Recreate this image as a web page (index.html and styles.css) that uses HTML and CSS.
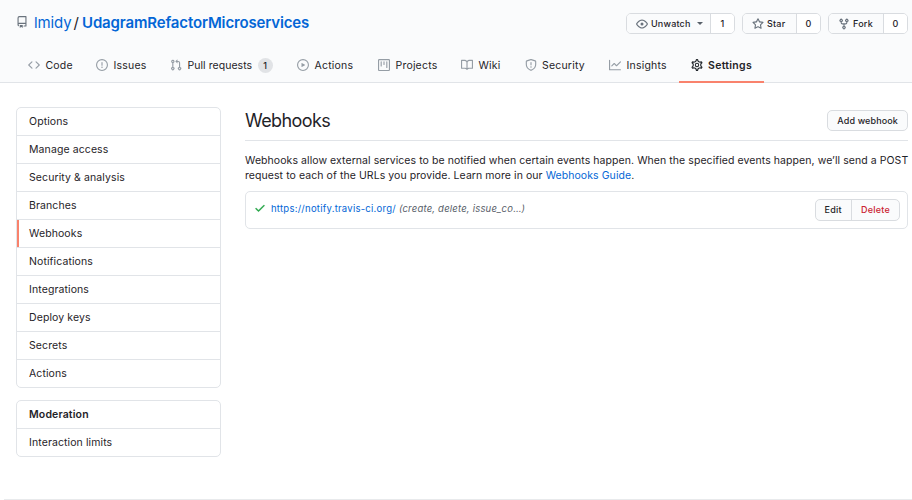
FILE: index.html
```html
<!DOCTYPE html>
<html lang="en">
<head>
<meta charset="utf-8">
<title>Webhooks</title>
<link rel="stylesheet" href="styles.css">
</head>
<body>
<header class="repo-head">
  <div class="repo-top">
    <h1 class="repo-title">
      <svg class="icon repo-icon" viewBox="0 0 16 16"><path d="M2 2.5A2.5 2.5 0 014.5 0h8.75a.75.75 0 01.75.75v12.5a.75.75 0 01-.75.75h-2.5a.75.75 0 110-1.5h1.75v-2h-8a1 1 0 00-.714 1.7.75.75 0 01-1.072 1.05A2.495 2.495 0 012 11.5v-9zm10.500-1V9h-8c-.356 0-.694.074-1 .208V2.500a1 1 0 011-1h8zM5 12.250v3.250a.25.25 0 00.4.200l1.450-1.087a.25.25 0 01.3 0L8.600 15.700a.25.25 0 00.4-.200v-3.250a.25.25 0 00-.25-.25h-3.500a.25.25 0 00-.25.25z"/></svg>
      <a class="owner">lmidy</a><span class="slash">/</span><a class="name">UdagramRefactorMicroservices</a>
    </h1>
    <div class="social">
      <div class="group watch"><a class="action"><svg class="icon" viewBox="0 0 16 16"><path d="M1.679 7.932c.412-.621 1.242-1.750 2.366-2.717C5.175 4.242 6.527 3.500 8 3.500c1.473 0 2.824.742 3.955 1.715 1.124.967 1.954 2.096 2.366 2.717a.119.119 0 010 .136c-.412.621-1.242 1.750-2.366 2.717C10.825 11.758 9.473 12.500 8 12.500c-1.473 0-2.824-.742-3.955-1.715C2.920 9.818 2.090 8.690 1.679 8.068a.119.119 0 010-.136zM8 2c-1.981 0-3.670.992-4.933 2.078C1.797 5.169.880 6.423.430 7.100a1.619 1.619 0 000 1.798c.450.678 1.367 1.932 2.637 3.024C4.329 13.008 6.019 14 8 14c1.981 0 3.670-.992 4.933-2.078 1.270-1.091 2.187-2.345 2.637-3.023a1.619 1.619 0 000-1.798c-.450-.678-1.367-1.932-2.637-3.023C11.671 2.992 9.981 2 8 2zm0 8a2 2 0 100-4 2 2 0 000 4z"/></svg><span>Unwatch</span><i class="caret"></i></a><a class="count">1</a></div>
      <div class="group star"><a class="action"><svg class="icon" viewBox="0 0 16 16"><path d="M8 .250a.75.75 0 01.673.418l1.882 3.815 4.210.612a.75.75 0 01.416 1.279l-3.046 2.970.719 4.192a.75.75 0 01-1.088.791L8 12.347l-3.766 1.980a.75.75 0 01-1.088-.790l.720-4.194L.818 6.374a.75.75 0 01.416-1.280l4.210-.611L7.327.668A.75.75 0 018 .250zm0 2.445L6.615 5.500a.75.75 0 01-.564.410l-3.097.450 2.240 2.184a.75.75 0 01.216.664l-.528 3.084 2.769-1.456a.75.75 0 01.698 0l2.770 1.456-.530-3.084a.75.75 0 01.216-.664l2.240-2.183-3.096-.450a.75.75 0 01-.564-.410L8 2.694z"/></svg><span>Star</span></a><a class="count">0</a></div>
      <div class="group fork"><a class="action"><svg class="icon" viewBox="0 0 16 16"><path d="M5 3.250a.75.75 0 11-1.500 0 .75.75 0 011.500 0zm0 2.122a2.250 2.250 0 10-1.500 0v.878A2.250 2.250 0 005.750 8.500h1.500v2.128a2.251 2.251 0 101.500 0V8.500h1.500a2.250 2.250 0 002.250-2.250v-.878a2.250 2.250 0 10-1.500 0v.878a.75.75 0 01-.75.75h-4.500A.75.75 0 015 6.250v-.878zm3.750 7.378a.75.75 0 11-1.500 0 .75.75 0 011.500 0zm3-8.750a.75.75 0 100-1.500.75.75 0 000 1.500z"/></svg><span>Fork</span></a><a class="count">0</a></div>
    </div>
  </div>
  <nav class="tabs">
    <a class="tab"><svg class="icon" viewBox="0 0 16 16"><path d="M4.720 3.220a.75.75 0 011.060 1.060L2.060 8l3.720 3.720a.75.75 0 11-1.060 1.060L.470 8.530a.75.75 0 010-1.060l4.250-4.250zm6.560 0a.75.75 0 10-1.060 1.060L13.940 8l-3.720 3.720a.75.75 0 101.060 1.060l4.250-4.250a.75.75 0 000-1.060l-4.250-4.250z"/></svg><span>Code</span></a>
    <a class="tab"><svg class="icon" viewBox="0 0 16 16"><path d="M8 1.500a6.500 6.500 0 100 13 6.500 6.500 0 000-13zM0 8a8 8 0 1116 0A8 8 0 010 8zm9 3a1 1 0 11-2 0 1 1 0 012 0zm-.250-6.250a.75.75 0 00-1.500 0v3.500a.75.75 0 001.500 0v-3.500z"/></svg><span>Issues</span></a>
    <a class="tab pulls"><svg class="icon" viewBox="0 0 16 16"><path d="M7.177 3.073L9.573.677A.25.25 0 0110 .854v4.792a.25.25 0 01-.427.177L7.177 3.427a.25.25 0 010-.354zM3.750 2.500a.75.75 0 100 1.500.75.75 0 000-1.500zm-2.250.750a2.250 2.250 0 113 2.122v5.256a2.251 2.251 0 11-1.500 0V5.372A2.250 2.250 0 011.500 3.250zM11 2.500h-1V4h1a1 1 0 011 1v5.628a2.251 2.251 0 101.500 0V5A2.500 2.500 0 0011 2.500zm1 10.250a.75.75 0 111.500 0 .75.75 0 01-1.500 0zM3.750 12a.75.75 0 100 1.500.75.75 0 000-1.500z"/></svg><span>Pull requests</span><b class="badge">1</b></a>
    <a class="tab"><svg class="icon" viewBox="0 0 16 16"><path d="M1.500 8a6.500 6.500 0 1113 0 6.500 6.500 0 01-13 0zM8 0a8 8 0 100 16A8 8 0 008 0zM6.379 5.227A.25.25 0 006 5.442v5.117a.25.25 0 00.379.214l4.264-2.559a.25.25 0 000-.428L6.379 5.227z"/></svg><span>Actions</span></a>
    <a class="tab"><svg class="icon" viewBox="0 0 16 16"><path d="M1.750 0A1.750 1.750 0 000 1.750v12.500C0 15.216.784 16 1.750 16h12.500A1.750 1.750 0 0016 14.250V1.750A1.750 1.750 0 0014.250 0H1.750zM1.500 1.750a.25.25 0 01.25-.25h12.500a.25.25 0 01.25.25v12.500a.25.25 0 01-.25.25H1.750a.25.25 0 01-.25-.25V1.750zM11.750 3a.75.75 0 00-.75.75v7.500a.75.75 0 001.500 0v-7.500a.75.75 0 00-.75-.75zm-8.250.750a.75.75 0 011.500 0v5.500a.75.75 0 01-1.500 0v-5.500zM8 3a.75.75 0 00-.75.75v3.500a.75.75 0 001.500 0v-3.500A.75.75 0 008 3z"/></svg><span>Projects</span></a>
    <a class="tab"><svg class="icon" viewBox="0 0 16 16"><path d="M0 1.750A.75.75 0 01.75 1h4.253c1.227 0 2.317.590 3 1.501A3.744 3.744 0 0111.006 1h4.245a.75.75 0 01.75.75v10.500a.75.75 0 01-.75.75h-4.507a2.250 2.250 0 00-1.591.659l-.622.621a.75.75 0 01-1.060 0l-.622-.621A2.250 2.250 0 005.258 13H.750a.75.75 0 01-.75-.75V1.750zm8.755 3a2.250 2.250 0 012.250-2.250H14.500v9h-3.757c-.710 0-1.400.201-1.992.572l.004-7.322zm-1.504 7.324l.004-5.073-.002-2.253A2.250 2.250 0 005.003 2.500H1.500v9h3.757a3.750 3.750 0 011.994.574z"/></svg><span>Wiki</span></a>
    <a class="tab"><svg class="icon" viewBox="0 0 16 16"><path d="M7.467.133a1.750 1.750 0 011.066 0l5.250 1.680A1.750 1.750 0 0115 3.480V7c0 1.566-.320 3.182-1.303 4.682-.983 1.498-2.585 2.813-5.032 3.855a1.700 1.700 0 01-1.330 0c-2.447-1.042-4.049-2.357-5.032-3.855C1.320 10.182 1 8.566 1 7V3.480a1.750 1.750 0 011.217-1.667l5.250-1.680zm.610 1.429a.25.25 0 00-.153 0l-5.250 1.680a.25.25 0 00-.174.238V7c0 1.358.275 2.666 1.057 3.860.784 1.194 2.121 2.340 4.366 3.297a.2.2 0 00.154 0c2.245-.956 3.582-2.104 4.366-3.298C13.225 9.666 13.500 8.360 13.500 7V3.480a.25.25 0 00-.174-.237l-5.250-1.680zM9 10.500a1 1 0 11-2 0 1 1 0 012 0zm-.250-5.750a.75.75 0 10-1.500 0v3a.75.75 0 001.500 0v-3z"/></svg><span>Security</span></a>
    <a class="tab"><svg class="icon" viewBox="0 0 16 16"><path d="M1.500 1.750a.75.75 0 00-1.500 0v12.500c0 .414.336.750.750.750h14.500a.75.75 0 000-1.500H1.500V1.750zm14.280 2.530a.75.75 0 00-1.060-1.060L10 7.940 7.530 5.470a.75.75 0 00-1.060 0L3.220 8.720a.75.75 0 001.060 1.060L7 7.060l2.470 2.470a.75.75 0 001.060 0l5.250-5.250z"/></svg><span>Insights</span></a>
    <a class="tab selected"><svg class="icon gear" viewBox="0 0 16 16"><path transform="translate(-.9 -.9) scale(1.112)" d="M7.429 1.525a6.593 6.593 0 011.142 0c.036.003.108.036.137.146l.289 1.105c.147.56.55.967.997 1.189.174.086.341.183.501.29.417.278.97.423 1.53.27l1.102-.303c.11-.03.175.016.195.046.219.31.41.641.573.989.014.031.022.11-.059.19l-.815.806c-.411.406-.562.957-.53 1.456a4.588 4.588 0 010 .582c-.032.499.119 1.05.53 1.456l.815.806c.08.08.073.159.059.19a6.494 6.494 0 01-.573.99c-.02.029-.086.074-.195.045l-1.103-.303c-.559-.153-1.112-.008-1.529.27-.16.107-.327.204-.5.29-.449.222-.851.628-.998 1.189l-.289 1.105c-.029.11-.101.143-.137.146a6.613 6.613 0 01-1.142 0c-.036-.003-.108-.037-.137-.146l-.289-1.105c-.147-.56-.55-.967-.997-1.189a4.502 4.502 0 01-.501-.29c-.417-.278-.97-.423-1.53-.27l-1.102.303c-.11.03-.175-.016-.195-.046a6.492 6.492 0 01-.573-.989c-.014-.031-.022-.11.059-.19l.815-.806c.411-.406.562-.957.53-1.456a4.587 4.587 0 010-.582c.032-.499-.119-1.05-.53-1.456l-.815-.806c-.08-.08-.073-.159-.059-.19a6.44 6.44 0 01.573-.99c.02-.029.086-.075.195-.045l1.103.303c.559.153 1.112.008 1.529-.27.16-.107.327-.204.5-.29.449-.222.851-.628.998-1.189l.289-1.105c.029-.11.101-.143.137-.146z"/><circle cx="8" cy="8" r="2.250"/></svg><span>Settings</span></a>
  </nav>
</header>
<main class="layout">
  <aside class="sidebar">
    <nav class="menu">
      <a>Options</a><a>Manage access</a><a>Security &amp; analysis</a><a>Branches</a><a class="current">Webhooks</a><a>Notifications</a><a>Integrations</a><a>Deploy keys</a><a>Secrets</a><a>Actions</a>
    </nav>
    <nav class="menu"><b>Moderation</b><a>Interaction limits</a></nav>
  </aside>
  <section class="content">
    <div class="subhead"><h2>Webhooks</h2><a class="button">Add webhook</a></div>
    <p class="intro">Webhooks allow external services to be notified when certain events happen. When the specified events happen, we’ll send a POST<br>request to each of the URLs you provide. Learn more in our <a>Webhooks Guide</a>.</p>
    <div class="hook">
      <svg class="icon check" viewBox="0 0 16 16"><path d="M13.780 4.220a.75.75 0 010 1.060l-7.250 7.250a.75.75 0 01-1.060 0L2.220 9.280a.75.75 0 011.060-1.060L6 10.940l6.720-6.720a.75.75 0 011.060 0z"/></svg>
      <a class="url">https://notify.travis-ci.org/</a>
      <em>(create, delete, issue_co…)</em>
      <div class="hook-actions"><a>Edit</a><a class="danger">Delete</a></div>
    </div>
  </section>
</main>
<footer class="footer"></footer>
</body>
</html>
```
FILE: styles.css
```css
* { box-sizing: border-box; }
body {
  margin: 0;
  height: 500px;
  display: flex;
  flex-direction: column;
  overflow: hidden;
  background: #fff;
  color: #1f2328;
  font: 10.5px/15px Inter, sans-serif;
  letter-spacing: .1px;
}
.icon { width: 12px; height: 12px; flex: none; fill: currentColor; fill-rule: evenodd; }
.repo-head { height: 83px; background: #fafbfc; border-bottom: 1px solid #e1e4e8; }
.repo-top { height: 48px; padding: 12px 4px 0 16px; display: flex; justify-content: space-between; align-items: flex-start; }
.repo-title { margin: 0; display: flex; align-items: center; font-size: 15px; line-height: 22px; font-weight: 400; letter-spacing: 0; }
.repo-icon { color: #6a737d; margin: 0 6px 2px 0; }
.repo-title a { color: #0366d6; }
.repo-title .owner { letter-spacing: -.1px; }
.repo-title .name { font-weight: 600; letter-spacing: -.15px; }
.slash { margin: 0 3px 0 2px; }
.social { display: flex; gap: 7px; padding-top: 1px; }
.group { display: flex; height: 21px; border: 1px solid #d9dce0; border-radius: 5px; overflow: hidden; font-size: 9px; line-height: 19px; font-weight: 500; letter-spacing: .2px; }
.action { flex: 1; display: flex; align-items: center; padding-left: 9px; gap: 3px; background: #fafbfc; }
.action .icon { color: #6a737d; }
.count { width: 24px; text-align: center; border-left: 1px solid #d9dce0; background: #fff; }
.watch { width: 109px; }
.star { width: 79px; }
.fork { width: 80px; }
.caret { margin-left: 3px; border: 3px solid transparent; border-top-color: #586069; border-bottom: 0; }
.tabs { display: grid; grid-template-columns: 68px 74px 127px 81px 83px 63.5px 84.5px 82px 85px; padding-left: 16px; height: 35px; }
.tab { display: flex; align-items: center; gap: 5.5px; padding: 0 0 1px 12px; letter-spacing: .2px; }
.tab .icon { color: #959da5; }
.pulls { letter-spacing: .05px; }
.badge { width: 15px; height: 15px; border-radius: 8px; background: #e1e3e6; font-size: 9px; font-weight: 500; letter-spacing: 0; text-align: center; }
.selected { font-weight: 600; border-bottom: 2px solid #f9826c; padding: 1px 0 0 12px; letter-spacing: .3px; gap: 5px; }
.tab .gear { fill: none; stroke: #24292e; stroke-width: 1.4; stroke-linejoin: round; }
.layout { display: grid; grid-template-columns: 205px 663px; column-gap: 24px; padding: 24px 4px 0 16px; flex: 1; }
.sidebar { display: flex; flex-direction: column; gap: 12px; }
.menu { display: flex; flex-direction: column; border: 1px solid #e1e4e8; border-radius: 5px; overflow: hidden; }
.menu > * { height: 28px; padding: 6px 12px; border-bottom: 1px solid #e1e4e8; }
.menu > :last-child { height: 27px; border-bottom: 0; }
.menu b { font-weight: 600; letter-spacing: .15px; }
.menu .current { box-shadow: inset 2px 0 #f9826c; }
.subhead { display: flex; justify-content: space-between; align-items: flex-start; height: 34px; border-bottom: 1px solid #e1e4e8; }
.subhead h2 { margin: 0; font-size: 18px; line-height: 28px; font-weight: 400; letter-spacing: -.6px; }
.button { height: 21px; margin-top: 3px; padding: 0 9px; border: 1px solid #d9dce0; border-radius: 5px; background: #fafbfc; font-size: 9px; line-height: 19px; font-weight: 500; letter-spacing: .12px; }
.intro { margin: 12px 0 8px; white-space: nowrap; letter-spacing: .07px; }
.intro a { color: #0366d6; }
.hook { height: 38px; border: 1px solid #e1e4e8; border-radius: 5px; display: flex; align-items: flex-start; padding: 7px; font-size: 9.5px; line-height: 20px; letter-spacing: .25px; }
.check { color: #22a344; stroke: currentColor; stroke-width: .5; margin: 3px 5px 0 1px; }
.url { color: #0366d6; margin-right: 3px; }
.hook em { color: #586069; letter-spacing: .2px; }
.hook-actions { display: flex; margin-left: auto; height: 22px; border: 1px solid #d9dce0; border-radius: 5px; overflow: hidden; background: #fafbfc; font-size: 9px; font-weight: 500; }
.hook-actions a { padding: 0 9px; }
.hook-actions .danger { color: #cb2431; border-left: 1px solid #d9dce0; }
.footer { height: 1px; margin-left: 4px; background: #e8eaec; }
```
